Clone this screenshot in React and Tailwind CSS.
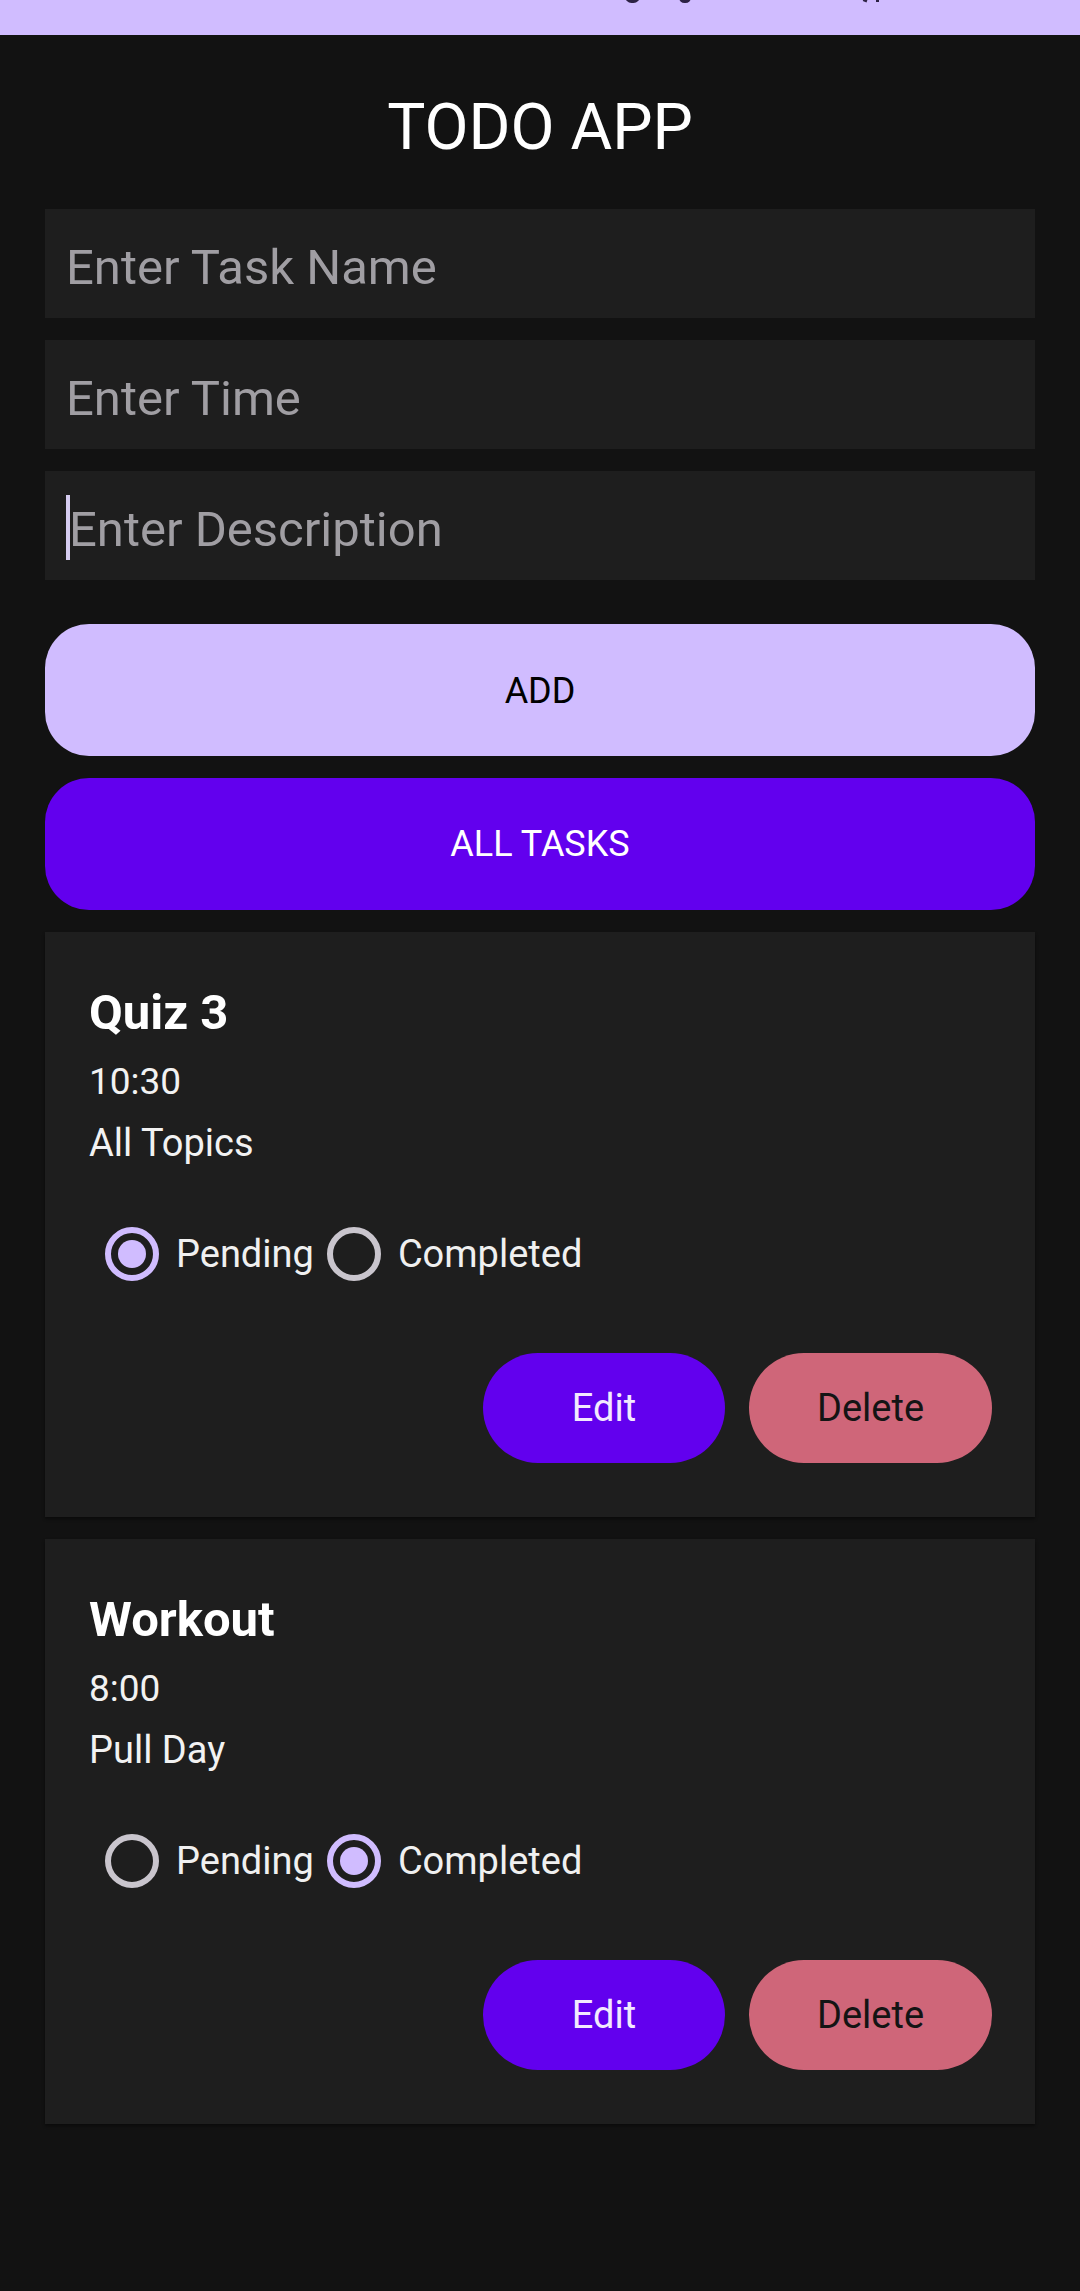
import React from "react";

const FONT = "font-['Roboto','Liberation_Sans',sans-serif]";

function Radio({ checked }) {
  return (
    <span
      className={
        checked
          ? "flex h-[54px] w-[54px] shrink-0 items-center justify-center rounded-full border-[6px] border-[#d0bcff]"
          : "flex h-[54px] w-[54px] shrink-0 items-center justify-center rounded-full border-[6px] border-[#c9c5cd]"
      }
    >
      {checked && <span className="h-[28px] w-[28px] rounded-full bg-[#d0bcff]" />}
    </span>
  );
}

function TaskCard({ title, time, desc, completed, className }) {
  return (
    <div
      className={
        "bg-[#1e1e1e] pt-[53px] pb-[54px] pl-[44px] pr-[43px] shadow-[0_2px_3px_rgba(0,0,0,0.45)] " +
        className
      }
    >
      <div className="text-[49px] font-bold leading-[56px] text-white">{title}</div>
      <div className="mt-[19px] text-[37px] leading-[44px] text-[#f2f2f2]">{time}</div>
      <div className="mt-[17px] text-[38px] leading-[44px] text-[#f2f2f2]">{desc}</div>
      <div className="mt-[62px] flex h-[54px] items-center pl-[16px] text-[38px] text-[#f0f0f0]">
        <Radio checked={!completed} />
        <span className="ml-[17px] leading-[44px]">Pending</span>
        <span className="ml-[13px]">
          <Radio checked={completed} />
        </span>
        <span className="ml-[17px] leading-[44px]">Completed</span>
      </div>
      <div className="mt-[72px] flex justify-end gap-[24px]">
        <button className="flex h-[110px] w-[242px] items-center justify-center rounded-full bg-[#6200ee] text-[38px] text-[#f3e9ff]">
          Edit
        </button>
        <button className="flex h-[110px] w-[243px] items-center justify-center rounded-full bg-[#cf6679] text-[38px] text-[#141414]">
          Delete
        </button>
      </div>
    </div>
  );
}

export default function App() {
  return (
    <div className={"min-h-[2291px] w-[1080px] bg-[#121212] " + FONT}>
      {/* status bar */}
      <div className="relative h-[35px] overflow-hidden bg-[#d0bcff]">
        <span className="absolute left-[625px] top-[-10px] h-[13px] w-[15px] rounded-full border-[3px] border-[#2d2244]" />
        <span className="absolute left-[679px] top-[-8px] h-[11px] w-[12px] rounded-full bg-[#2d2244]" />
        <span className="absolute left-[864px] top-[-6px] h-[8px] w-[4px] rotate-[20deg] bg-[#2d2244]" />
        <span className="absolute left-[876px] top-[-6px] h-[8px] w-[3px] bg-[#2d2244]" />
      </div>

      <div className="px-[45px]">
        <h1 className="mt-[55px] h-[75px] text-center text-[64px] font-normal leading-[75px] text-white">
          TODO APP
        </h1>

        <div className="mt-[44px] flex flex-col gap-[22px]">
          <div className="h-[109px] bg-[#1e1e1e] pl-[21px] pt-[30px] text-[49px] leading-[57px] text-[#a09ea3]">
            Enter Task Name
          </div>
          <div className="h-[109px] bg-[#1e1e1e] pl-[21px] pt-[30px] text-[49px] leading-[57px] text-[#a09ea3]">
            Enter Time
          </div>
          <div className="flex h-[109px] bg-[#1e1e1e] pl-[21px] pt-[30px] text-[49px] leading-[57px] text-[#a09ea3]">
            <span className="mt-[-6px] h-[65px] w-[4px] bg-[#d6ccf0]" />
            <span className="-ml-[1px]">Enter Description</span>
          </div>
        </div>

        <button className="mt-[44px] flex h-[132px] w-full items-center justify-center rounded-[44px] bg-[#d0bcff] pt-[2px] text-[36px] text-black">
          ADD
        </button>
        <button className="mt-[22px] flex h-[132px] w-full items-center justify-center rounded-[44px] bg-[#6200ee] text-[36px] text-white">
          ALL TASKS
        </button>

        <TaskCard className="mt-[22px]" title="Quiz 3" time="10:30" desc="All Topics" completed={false} />
        <TaskCard className="mt-[22px]" title="Workout" time="8:00" desc="Pull Day" completed={true} />
      </div>
    </div>
  );
}
